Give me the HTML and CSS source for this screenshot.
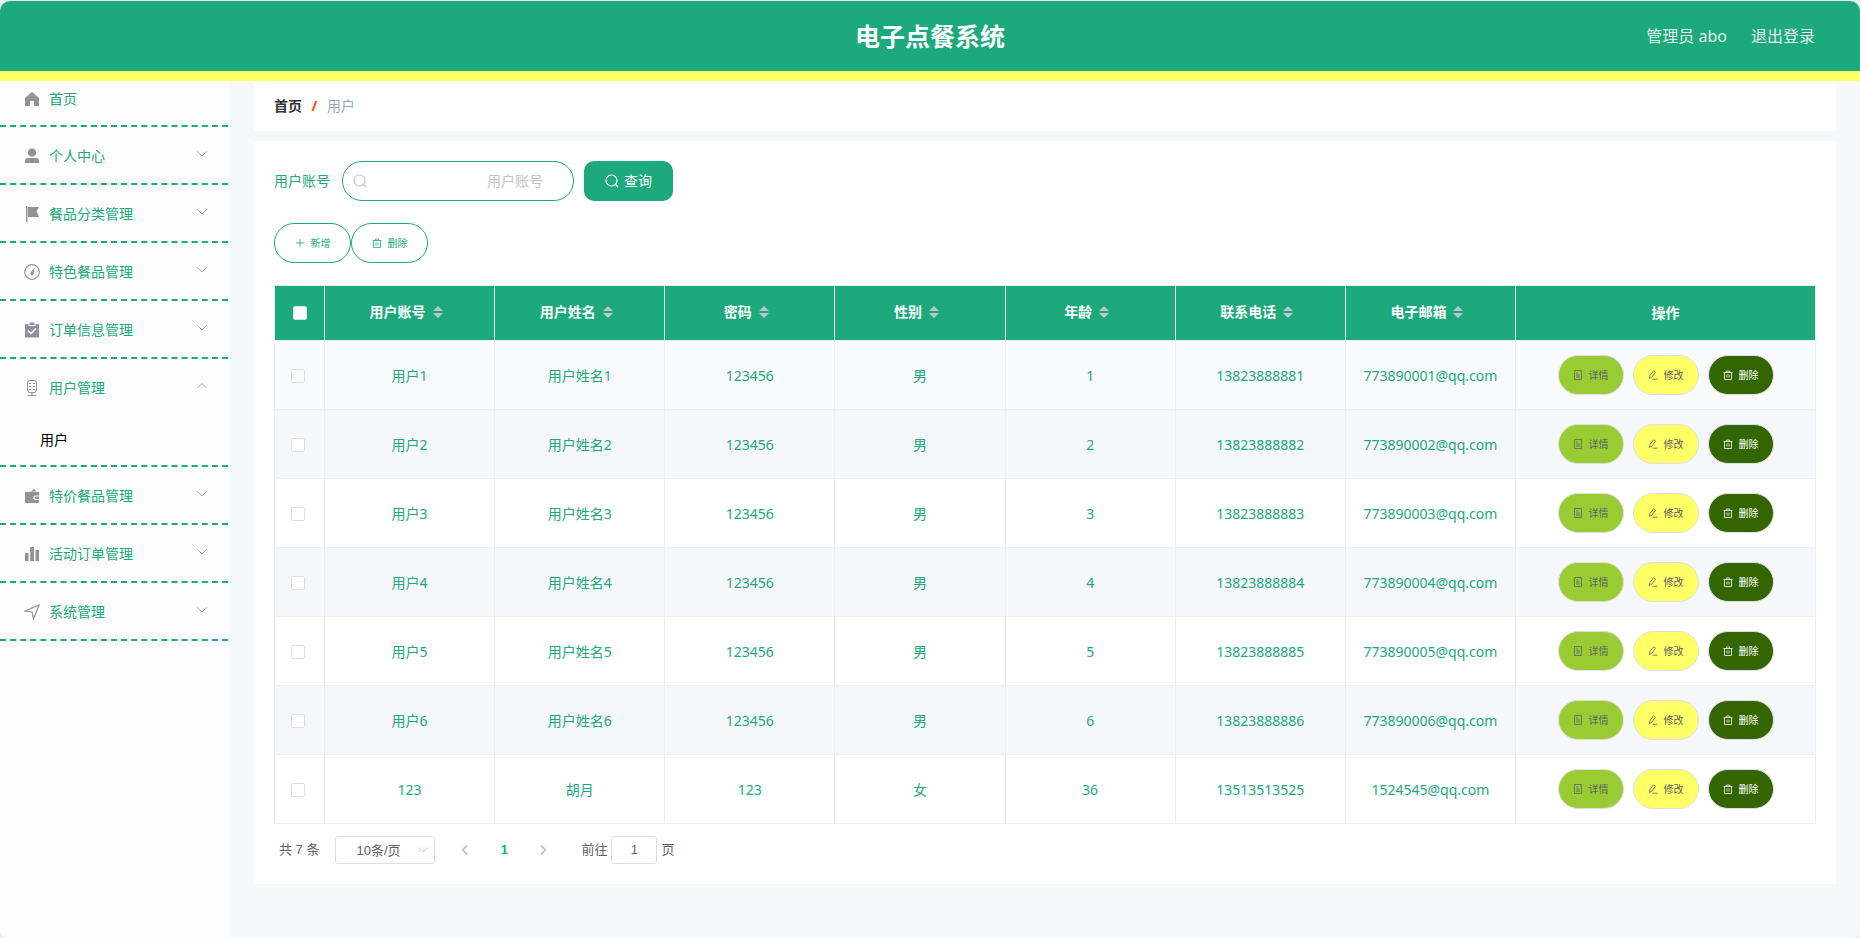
FILE: index.html
```html
<!DOCTYPE html>
<html lang="zh-CN">
<head>
<meta charset="utf-8">
<title>电子点餐系统</title>
<link rel="stylesheet" href="styles.css">
</head>
<body>
<svg class="defs" aria-hidden="true">
  <symbol id="i-down" viewBox="0 0 12 12"><path d="M1.500 3.500 6 8l4.500-4.500" fill="none" stroke="currentColor"/></symbol>
  <symbol id="i-up" viewBox="0 0 12 12"><path d="M1.500 8 6 3.500 10.500 8" fill="none" stroke="currentColor"/></symbol>
  <symbol id="i-search" viewBox="0 0 14 14"><circle cx="6.500" cy="6.500" r="5.500" fill="none" stroke="currentColor" stroke-width="1.200"/><path d="m10.500 10.500 2.500 2.500" stroke="currentColor" stroke-width="1.200"/></symbol>
  <symbol id="i-plus" viewBox="0 0 10 10"><path d="M5 1v8M1 5h8" stroke="currentColor" stroke-width=".8" fill="none"/></symbol>
  <symbol id="i-trash" viewBox="0 0 10 10"><path d="M.5 2.500h9M3.500 2.500V1h3v1.500M1.500 2.500v7h7v-7M4 4.500v3M6 4.500v3" stroke="currentColor" stroke-width=".8" fill="none"/></symbol>
  <symbol id="i-doc" viewBox="0 0 10 10"><path d="M1.500.5h7v9h-7zM3 3h2M3 5h4M3 7h4" stroke="currentColor" stroke-width=".8" fill="none"/></symbol>
  <symbol id="i-edit" viewBox="0 0 10 10"><path d="M1.500 8.500 2 5.500 5.500.8l2 1.400L4 7 1.500 8.500ZM4.500 9.200h5" stroke="currentColor" stroke-width=".8" fill="none"/></symbol>
</svg>

<div class="app">
<header class="top">
  <h1 class="top-title">电子点餐系统</h1>
  <div class="top-user"><span>管理员 abo</span><a href="#">退出登录</a></div>
</header>

<div class="body">
<nav class="side">
  <a class="item item-home" href="#"><svg class="ico" viewBox="0 0 16 16"><path d="M8 1 1 7v8h5v-5h4v5h5V7z"/></svg><span>首页</span></a>
  <a class="item" href="#"><svg class="ico" viewBox="0 0 16 16"><circle cx="8" cy="4.500" r="4"/><path d="M1 15v-2q0-3 3-3h8q3 0 3 3v2z"/></svg><span>个人中心</span><svg class="arrow"><use href="#i-down"/></svg></a>
  <a class="item" href="#"><svg class="ico" viewBox="0 0 16 16"><path d="M2 0h1.500v16H2zM4 1h11l-2.500 4.500L15 11H4z"/></svg><span>餐品分类管理</span><svg class="arrow"><use href="#i-down"/></svg></a>
  <a class="item" href="#"><svg class="ico" viewBox="0 0 16 16"><circle cx="8" cy="8" r="7.400" fill="none" stroke="currentColor" stroke-width="1.100"/><path d="m10.500 3.500-.8 6A1.700 1.700 0 1 1 6.800 8.500z"/></svg><span>特色餐品管理</span><svg class="arrow"><use href="#i-down"/></svg></a>
  <a class="item" href="#"><svg class="ico" viewBox="0 0 16 16"><path fill-rule="evenodd" d="M1 2h3.500v2h7V2H15v13.500H1zm3.500 6-1 1 3.500 3.500 5.500-5.500-1-1L7 10.500z"/><path d="M5.500.5h5v2.500h-5z"/></svg><span>订单信息管理</span><svg class="arrow"><use href="#i-down"/></svg></a>
  <div class="group">
    <a class="item item-open" href="#"><svg class="ico" viewBox="0 0 16 16" fill="none" stroke="currentColor"><rect x="3.500" y=".5" width="9" height="12" rx="2.500"/><path d="M5 3.500h2M5 6.500h2M5 9.500h2M9 3.500h2M9 6.500h2M9 9.500h2M8 12.500v3M3.500 15.500h9"/></svg><span>用户管理</span><svg class="arrow"><use href="#i-up"/></svg></a>
    <a class="sub" href="#">用户</a>
  </div>
  <a class="item" href="#"><svg class="ico" viewBox="0 0 16 16"><path fill-rule="evenodd" d="M1 4h14v3.500h-3.500a2.300 2.300 0 0 0 0 4.600H15V15H1z"/><path d="m6 3.500 4.500-2.500 2 2.500z"/><path d="M12 8.500h3v2.500h-3a1.200 1.200 0 0 1 0-2.500z"/></svg><span>特价餐品管理</span><svg class="arrow"><use href="#i-down"/></svg></a>
  <a class="item" href="#"><svg class="ico" viewBox="0 0 16 16"><path d="M1 7h3.500v8H1zM6.200 1H10v14H6.200zM11.500 4H15v11h-3.500z"/></svg><span>活动订单管理</span><svg class="arrow"><use href="#i-down"/></svg></a>
  <a class="item" href="#"><svg class="ico" viewBox="0 0 16 16" fill="none" stroke="currentColor" stroke-width="1.200"><path d="M1 7 15 1 9.500 15 8 8z"/></svg><span>系统管理</span><svg class="arrow"><use href="#i-down"/></svg></a>
</nav>

<main class="main">
  <div class="crumb"><b>首页</b><i>/</i><span>用户</span></div>
  <section class="card">
    <form class="search">
      <label for="acc">用户账号</label>
      <div class="field"><svg class="s14"><use href="#i-search"/></svg><input id="acc" type="text" placeholder="用户账号"></div>
      <button class="query" type="button"><svg class="s14"><use href="#i-search"/></svg>查询</button>
    </form>
    <div class="tools">
      <button type="button" class="tool"><svg class="s10"><use href="#i-plus"/></svg>新增</button>
      <button type="button" class="tool"><svg class="s10"><use href="#i-trash"/></svg>删除</button>
    </div>
    <table class="grid">
      <colgroup><col class="c-check"><col><col><col><col><col><col><col><col class="c-act"></colgroup>
      <thead><tr id="head"></tr></thead>
      <tbody id="rows"></tbody>
    </table>
    <div class="pager">
      <span class="total">共 7 条</span>
      <span class="size"><select aria-label="每页条数"><option>10条/页</option></select><svg class="size-arrow"><use href="#i-down"/></svg></span>
      <button type="button" class="pg" aria-label="上一页"><svg class="s12" viewBox="0 0 12 12"><path d="M8 1.500 3.500 6 8 10.500" fill="none" stroke="currentColor" stroke-width="1.800"/></svg></button>
      <button type="button" class="pg pg-on">1</button>
      <button type="button" class="pg" aria-label="下一页"><svg class="s12" viewBox="0 0 12 12"><path d="M4 1.500 8.500 6 4 10.500" fill="none" stroke="currentColor" stroke-width="1.800"/></svg></button>
      <label class="jump">前往<input type="text" value="1">页</label>
    </div>
  </section>
</main>
</div>
</div>
<script src="app.js"></script>
</body>
</html>
```
FILE: styles.css
```css
* { box-sizing: border-box; }
body {
  margin: 0;
  background: #eceeef;
  font: 14px/20px "Noto Sans", "Noto Sans CJK SC", sans-serif;
  color: #1ca97b;
}
button, input, select { font: inherit; color: inherit; margin: 0; }
a { color: inherit; text-decoration: none; }
.defs { display: none; }
.app {
  display: flex;
  flex-direction: column;
  min-height: 100vh;
  padding-top: 1px;
}
.top {
  display: grid;
  grid-template-columns: 1fr auto 1fr;
  align-items: center;
  height: 80px;
  padding: 0 45px;
  background: #1ca97b;
  border-bottom: 10px solid #ffff66;
  border-radius: 10px 10px 0 0;
}
.top-title { grid-column: 2; margin: 0; font-size: 25px; line-height: 36px; color: #fff; }
.top-user { display: flex; justify-content: flex-end; gap: 24px; font-size: 16px; line-height: 24px; color: #e4ebe8; }
.body { display: flex; flex: 1; background: #f7f8fa; border-radius: 0 0 8px 8px; }

.side { flex: none; width: 230px; background: #fcfcfc; border-radius: 0 0 0 8px; }
.item {
  display: flex;
  align-items: center;
  gap: 9px;
  height: 58px;
  margin-right: 2px;
  padding: 2px 20px 0 24px;
  border-bottom: 2px dashed #1ca97b;
}
.item-home { height: 46px; padding-top: 0; padding-bottom: 8px; }
.item-open { height: 56px; margin-right: 0; border-bottom: 0; }
.group { margin-right: 2px; border-bottom: 2px dashed #1ca97b; }
.sub { display: block; padding: 0 40px; line-height: 50px; color: #000; }
.ico { flex: none; width: 16px; height: 16px; fill: #909399; color: #909399; }
.ico[fill="none"] { fill: none; }
.arrow { width: 12px; height: 12px; margin: 0 0 4px auto; color: #a9a9ad; }

.main { flex: 1; min-width: 0; padding: 0 24px 54px; }
.crumb {
  display: flex;
  align-items: center;
  gap: 8px;
  height: 50px;
  padding: 0 20px;
  background: #fff;
  border-radius: 4px;
  color: #97a8be;
}
.crumb b { color: #303133; }
.crumb i { color: #ff4500; font-weight: bold; font-style: normal; width: 9px; text-align: center; }
.card { margin-top: 10px; padding: 20px; background: #fff; }
.search { display: flex; align-items: center; gap: 10px; }
.search label { margin-right: 2px; }
.field {
  display: flex;
  align-items: center;
  width: 232px;
  height: 40px;
  padding: 0 30px 0 10px;
  border: 1px solid #1ca97b;
  border-radius: 20px;
  color: #c0c4cc;
}
.field input { flex: 1; min-width: 0; border: 0; padding: 0; background: none; outline: 0; text-align: right; }
.field input::placeholder { color: #c0c4cc; opacity: 1; }
.s14 { flex: none; width: 14px; height: 14px; }
.s12 { width: 12px; height: 12px; }
.s10 { flex: none; width: 10px; height: 10px; }
.query, .tool, .act { display: inline-flex; align-items: center; justify-content: center; gap: 5px; height: 40px; padding: 0; border: 0; }
.query { width: 89px; border-radius: 10px; background: #1ca97b; color: #fff; }
.tools { display: flex; margin: 22px 0; }
.tool { width: 77px; gap: 6px; border: 1px solid #1ca97b; border-radius: 20px; background: #fff; font-size: 10px; }

.grid { width: 100%; table-layout: fixed; border-collapse: collapse; text-align: center; }
.c-check { width: 50px; }
.c-act { width: 300px; }
.grid th, .grid td { padding: 0; border: 1px solid #ebeef5; }
.grid th { height: 55px; background: #1ca97b; color: #fff; }
.grid td { height: 69px; padding-top: 2px; }
.grid td:last-child { padding-top: 0; }
.grid tbody tr:nth-child(even) { background: #f5f7fa; }
.grid tbody tr:first-child { background: #f9fafc; }
.th { display: flex; align-items: center; justify-content: center; gap: 7px; padding: 0 7px 2px 0; }
.sort { width: 10px; height: 12px; fill: #c0c4cc; }
.grid input {
  appearance: none;
  display: block;
  width: 14px;
  height: 14px;
  margin: 0 auto;
  border: 1px solid #dcdfe6;
  border-radius: 2px;
  background: #fff;
}
.grid td input { margin-left: 16px; }
.acts { display: flex; justify-content: center; gap: 9px; }
.act { width: 66px; gap: 6px; border: 1px solid #dcdfe6; border-radius: 20px; font-size: 10px; color: #606266; }
.act-view { background: #99cc33; }
.act-edit { background: #ffff66; }
.act-del { background: #336600; color: #fff; }

.pager {
  display: flex;
  align-items: center;
  padding: 12px 5px 0;
  font: 13px/28px "Liberation Sans", "Noto Sans CJK SC", sans-serif;
  color: #606266;
}
.size { display: grid; align-items: center; width: 100px; margin: 0 15px 0 16px; }
.size select {
  grid-area: 1 / 1;
  appearance: none;
  height: 28px;
  padding: 0 0 0 20px;
  border: 1px solid #dcdfe6;
  border-radius: 3px;
  background: #fff;
}
.size-arrow { grid-area: 1 / 1; justify-self: end; width: 12px; height: 12px; margin-right: 6px; color: #c0c4cc; pointer-events: none; }
.pg { display: flex; align-items: center; justify-content: center; width: 30px; height: 28px; margin-right: 9px; padding: 0; border: 0; background: none; color: #c0c4cc; }
.pg-on { color: #00b88a; font-weight: bold; }
.jump { display: flex; align-items: center; gap: 4px; margin-left: 14px; }
.jump input { width: 46px; height: 28px; padding: 0; border: 1px solid #dcdfe6; border-radius: 3px; text-align: center; }
```
FILE: app.js
```js
const columns = ["用户账号", "用户姓名", "密码", "性别", "年龄", "联系电话", "电子邮箱"];
const users = [1, 2, 3, 4, 5, 6].map(n => [
  "用户" + n, "用户姓名" + n, "123456", "男", n, "1382388888" + n, "77389000" + n + "@qq.com"
]);
users.push(["123", "胡月", "123", "女", "36", "13513513525", "1524545@qq.com"]);

const sort = '<svg class="sort" viewBox="0 0 10 12"><path d="M0 5 5 0l5 5zM0 7h10l-5 5z"/></svg>';
const act = (kind, icon, text) =>
  `<button type="button" class="act act-${kind}"><svg class="s10"><use href="#i-${icon}"/></svg>${text}</button>`;

document.getElementById("head").innerHTML =
  '<th><input type="checkbox" aria-label="全选"></th>' +
  columns.map(c => `<th><div class="th">${c}${sort}</div></th>`).join("") +
  "<th>操作</th>";

document.getElementById("rows").innerHTML = users.map(u =>
  `<tr><td><input type="checkbox" aria-label="${u[0]}"></td>` +
  u.map(v => `<td>${v}</td>`).join("") +
  `<td><div class="acts">${act("view", "doc", "详情")}${act("edit", "edit", "修改")}${act("del", "trash", "删除")}</div></td></tr>`
).join("");
```
